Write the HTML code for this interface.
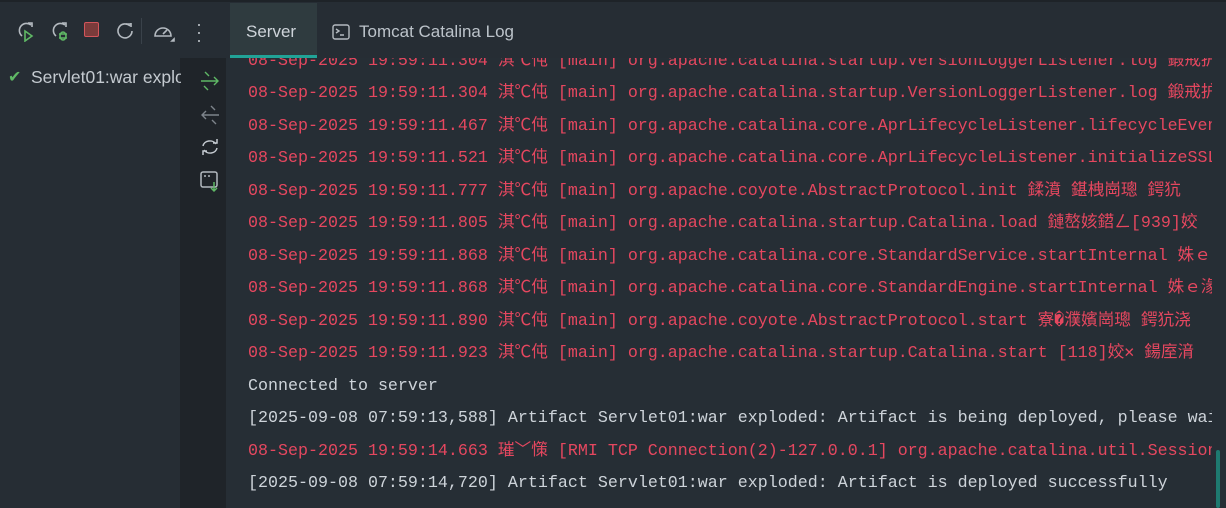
<!DOCTYPE html>
<html><head><meta charset="utf-8"><style>
*{margin:0;padding:0;box-sizing:border-box}
body{width:1226px;height:508px;background:#262e35;overflow:hidden;position:relative;font-family:"Liberation Sans","Noto Sans CJK SC",sans-serif}
.top{position:absolute;left:0;top:0;width:1226px;height:58px;background:#262d34;border-top:2px solid #1e2328}
.left{position:absolute;left:0;top:58px;width:185px;height:450px;background:#262d34}
.strip{position:absolute;left:180px;top:58px;width:46px;height:450px;background:#1f2429}
.tab{position:absolute;top:4px;height:55px;font-size:17px;color:#cfd4da;line-height:55px}
.con{position:absolute;left:233px;top:58px;width:979px;height:450px;overflow:hidden;background:#262e35}
pre{position:absolute;left:15px;top:-12.5px;font-family:"Liberation Mono","Noto Sans CJK SC",monospace;font-size:16.67px;line-height:32.5px;color:#e5475f;white-space:pre}
.w{color:#cdd3d9}
svg{position:absolute}
</style></head><body>
<div class="top"></div>
<div class="left"></div>
<div class="strip"></div>
<svg style="left:16px;top:20px" width="22" height="22" viewBox="0 0 22 22" fill="none" stroke-width="1.6"><path d="M15 5A7 7 0 1 0 6 16" stroke="#b4bac0"/><path d="M12 3h4v4" stroke="#b4bac0"/><path d="M9 11l7 5-7 5z" stroke="#5fb865"/></svg>
<svg style="left:50px;top:20px" width="22" height="22" viewBox="0 0 22 22" fill="none" stroke-width="1.6"><path d="M15 5A7 7 0 1 0 6 16" stroke="#b4bac0"/><path d="M12 3h4v4" stroke="#b4bac0"/><ellipse cx="13" cy="16" rx="3" ry="4" stroke="#5fb865"/><path d="M9 14h8M9 18h8" stroke="#5fb865"/></svg>
<div style="position:absolute;left:84px;top:22px;width:15px;height:15px;background:#7a3b3b;border:1.5px solid #d3555b;border-radius:2px"></div>
<svg style="left:114px;top:20px" width="22" height="22" viewBox="0 0 22 22" fill="none" stroke="#b4bac0" stroke-width="1.6"><path d="M16 6A7 7 0 1 0 18 11"/><path d="M12 4h5v-1 4"/></svg>
<div style="position:absolute;left:141px;top:18px;width:1px;height:26px;background:#3a424a"></div>
<svg style="left:152px;top:21px" width="24" height="22" viewBox="0 0 24 22" fill="none" stroke="#b4bac0" stroke-width="1.6"><path d="M3 15A8 8 0 1 1 19 15Z"/><path d="M11 13l4-4"/><path d="M20 20l2-2v2z" fill="#b4bac0"/></svg>
<div style="position:absolute;left:196px;top:20px;color:#b4bac0;font-size:18px;line-height:8px;width:6px;text-align:center">·<br>·<br>·</div>
<div style="position:absolute;left:230px;top:3px;width:87px;height:55px;background:#2f3b3f;border-bottom:3px solid #21a397"></div>
<div class="tab" style="left:246px">Server</div>
<svg style="left:332px;top:24px" width="18" height="16" viewBox="0 0 18 16" fill="none" stroke="#b4bac0" stroke-width="1.4"><rect x="1" y="1" width="16" height="14" rx="2"/><path d="M4 5l3 2-3 2M8 11h4"/></svg>
<div class="tab" style="left:359px;color:#bcc3ca">Tomcat Catalina Log</div>
<div style="position:absolute;left:8px;top:67px;color:#5fb865;font-size:16px">✔</div>
<div style="position:absolute;left:31px;top:67px;color:#c4cad0;font-size:17.5px;width:150px;overflow:hidden;white-space:nowrap">Servlet01:war exploded</div>
<svg style="left:198px;top:70px" width="24" height="22" viewBox="0 0 24 22" fill="none" stroke="#5fb865" stroke-width="1.4"><path d="M3 11h17M16 7l4 4-4 4M7 2l4 4M6 16l4 4"/></svg>
<svg style="left:198px;top:104px" width="24" height="22" viewBox="0 0 24 22" fill="none" stroke="#7d848b" stroke-width="1.4"><path d="M4 11h17M8 7l-4 4 4 4M13 2l4 4M14 16l4 4"/></svg>
<svg style="left:198px;top:136px" width="24" height="22" viewBox="0 0 24 22" fill="none" stroke="#c4cad0" stroke-width="1.5"><path d="M5 10a7 6 0 0 1 13-2M19 12a7 6 0 0 1-13 2M15 7h4V3M9 15H5v4"/></svg>
<svg style="left:198px;top:170px" width="24" height="24" viewBox="0 0 24 24" fill="none" stroke-width="1.5"><rect x="3" y="2" width="16" height="15" rx="2" stroke="#b4bac0"/><path d="M6 6h2M10 6h2" stroke="#b4bac0"/><path d="M16 12v9M13 18l3 3 3-3" stroke="#5fb865"/></svg>
<div class="con"><pre>08-Sep-2025 19:59:11.304 淇℃伅 [main] org.apache.catalina.startup.VersionLoggerListener.log 鍛戒护
08-Sep-2025 19:59:11.304 淇℃伅 [main] org.apache.catalina.startup.VersionLoggerListener.log 鍛戒护
08-Sep-2025 19:59:11.467 淇℃伅 [main] org.apache.catalina.core.AprLifecycleListener.lifecycleEvent
08-Sep-2025 19:59:11.521 淇℃伅 [main] org.apache.catalina.core.AprLifecycleListener.initializeSSL
08-Sep-2025 19:59:11.777 淇℃伅 [main] org.apache.coyote.AbstractProtocol.init 鍒濆 鍖栧崗璁 鍔犺
08-Sep-2025 19:59:11.805 淇℃伅 [main] org.apache.catalina.startup.Catalina.load 鏈嶅姟鍣ㄥ[939]姣
08-Sep-2025 19:59:11.868 淇℃伅 [main] org.apache.catalina.core.StandardService.startInternal 姝ｅ
08-Sep-2025 19:59:11.868 淇℃伅 [main] org.apache.catalina.core.StandardEngine.startInternal 姝ｅ湪
08-Sep-2025 19:59:11.890 淇℃伅 [main] org.apache.coyote.AbstractProtocol.start 寮�濮嬪崗璁 鍔犺浇
08-Sep-2025 19:59:11.923 淇℃伅 [main] org.apache.catalina.startup.Catalina.start [118]姣✕ 鍚庢湇
<span class="w">Connected to server</span>
<span class="w">[2025-09-08 07:59:13,588] Artifact Servlet01:war exploded: Artifact is being deployed, please wait</span>
08-Sep-2025 19:59:14.663 璀﹀憡 [RMI TCP Connection(2)-127.0.0.1] org.apache.catalina.util.SessionId
<span class="w">[2025-09-08 07:59:14,720] Artifact Servlet01:war exploded: Artifact is deployed successfully</span>
<span class="w">[2025-09-08 07:59:14,720]</span></pre></div>
<div style="position:absolute;left:1216px;top:450px;width:4px;height:58px;background:#1e7a70;border-radius:2px"></div>
</body></html>
